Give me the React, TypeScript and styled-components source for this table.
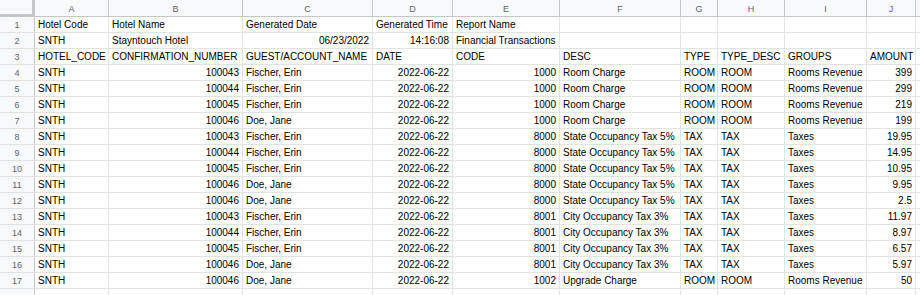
import styled, {createGlobalStyle} from 'styled-components';

const GlobalStyle = createGlobalStyle`
  body {
    margin: 0;
    background: #ffffff;
    font-family: "Liberation Sans", Arial, sans-serif;
  }
`;

const columns = ['A', 'B', 'C', 'D', 'E', 'F', 'G', 'H', 'I', 'J', ''];
const widths = [74, 134, 130, 80, 107, 121, 37, 67, 82, 49];

type Cell = string | number | null;

// right aligned columns for the data rows (B, D, E, J)
const numeric = [false, true, false, true, true, false, false, false, false, true];

const rows: Cell[][] = [
  ['Hotel Code', 'Hotel Name', 'Generated Date', 'Generated Time', 'Report Name', null, null, null, null, null],
  ['SNTH', 'Stayntouch Hotel', '06/23/2022', '14:16:08', 'Financial Transactions', null, null, null, null, null],
  ['HOTEL_CODE', 'CONFIRMATION_NUMBER', 'GUEST/ACCOUNT_NAME', 'DATE', 'CODE', 'DESC', 'TYPE', 'TYPE_DESC', 'GROUPS', 'AMOUNT'],
  ['SNTH', 100043, 'Fischer, Erin', '2022-06-22', 1000, 'Room Charge', 'ROOM', 'ROOM', 'Rooms Revenue', 399],
  ['SNTH', 100044, 'Fischer, Erin', '2022-06-22', 1000, 'Room Charge', 'ROOM', 'ROOM', 'Rooms Revenue', 299],
  ['SNTH', 100045, 'Fischer, Erin', '2022-06-22', 1000, 'Room Charge', 'ROOM', 'ROOM', 'Rooms Revenue', 219],
  ['SNTH', 100046, 'Doe, Jane', '2022-06-22', 1000, 'Room Charge', 'ROOM', 'ROOM', 'Rooms Revenue', 199],
  ['SNTH', 100043, 'Fischer, Erin', '2022-06-22', 8000, 'State Occupancy Tax 5%', 'TAX', 'TAX', 'Taxes', 19.95],
  ['SNTH', 100044, 'Fischer, Erin', '2022-06-22', 8000, 'State Occupancy Tax 5%', 'TAX', 'TAX', 'Taxes', 14.95],
  ['SNTH', 100045, 'Fischer, Erin', '2022-06-22', 8000, 'State Occupancy Tax 5%', 'TAX', 'TAX', 'Taxes', 10.95],
  ['SNTH', 100046, 'Doe, Jane', '2022-06-22', 8000, 'State Occupancy Tax 5%', 'TAX', 'TAX', 'Taxes', 9.95],
  ['SNTH', 100046, 'Doe, Jane', '2022-06-22', 8000, 'State Occupancy Tax 5%', 'TAX', 'TAX', 'Taxes', 2.5],
  ['SNTH', 100043, 'Fischer, Erin', '2022-06-22', 8001, 'City Occupancy Tax 3%', 'TAX', 'TAX', 'Taxes', 11.97],
  ['SNTH', 100044, 'Fischer, Erin', '2022-06-22', 8001, 'City Occupancy Tax 3%', 'TAX', 'TAX', 'Taxes', 8.97],
  ['SNTH', 100045, 'Fischer, Erin', '2022-06-22', 8001, 'City Occupancy Tax 3%', 'TAX', 'TAX', 'Taxes', 6.57],
  ['SNTH', 100046, 'Doe, Jane', '2022-06-22', 8001, 'City Occupancy Tax 3%', 'TAX', 'TAX', 'Taxes', 5.97],
  ['SNTH', 100046, 'Doe, Jane', '2022-06-22', 1002, 'Upgrade Charge', 'ROOM', 'ROOM', 'Rooms Revenue', 50],
];

const App = () => {
  return (
    <>
      <GlobalStyle />
      <Sheet>
        <Corner />
        {columns.map((c, i) => (
          <ColHead key={'h' + i}>{c}</ColHead>
        ))}
        {rows.map((row, r) => (
          <Row key={r} row={row} index={r} />
        ))}
        <RowHead />
        {columns.map((_, i) => (
          <Cell key={'x' + i} />
        ))}
      </Sheet>
    </>
  );
};

const Row = ({row, index}: {row: Cell[]; index: number}) => {
  return (
    <>
      <RowHead>{index + 1}</RowHead>
      {row.map((value, i) => {
        // dates in row 2 and data rows are right aligned, headers aren't
        const right =
          (index === 1 && (i === 2 || i === 3)) ||
          (index >= 3 && (numeric[i] || i === 3));
        return (
          <Cell key={i} $right={right}>
            {value}
          </Cell>
        );
      })}
      <Cell />
    </>
  );
};

const Sheet = styled.div`
  display: grid;
  grid-template-columns: 35px ${widths.map((w) => w + 'px').join(' ')} 1fr;
  grid-template-rows: 17px repeat(18, 16px);
  width: 920px;
  height: 295px;
  overflow: hidden;
  font-size: 10px;
  color: #000000;
`;

const Corner = styled.div`
  box-sizing: border-box;
  background: #f8f9fa;
  border-right: 3px solid #c4c7c5;
  border-bottom: 3px solid #c4c7c5;
`;

const ColHead = styled.div`
  box-sizing: border-box;
  background: #f8f9fa;
  border-right: 1px solid #c4c7c5;
  border-bottom: 1px solid #c4c7c5;
  color: #5f6368;
  font-size: 9px;
  display: flex;
  align-items: center;
  justify-content: center;
  padding-top: 1px;
`;

const RowHead = styled.div`
  box-sizing: border-box;
  background: #f8f9fa;
  border-right: 1px solid #c4c7c5;
  border-bottom: 1px solid #e1e3e1;
  color: #5f6368;
  font-size: 9px;
  display: flex;
  align-items: center;
  justify-content: center;
`;

const Cell = styled.div<{$right?: boolean}>`
  box-sizing: border-box;
  border-right: 1px solid #e2e3e3;
  border-bottom: 1px solid #e2e3e3;
  padding: 0 3px;
  line-height: 16px;
  white-space: nowrap;
  overflow: hidden;
  text-align: ${(p) => (p.$right ? 'right' : 'left')};
`;

export default App;
